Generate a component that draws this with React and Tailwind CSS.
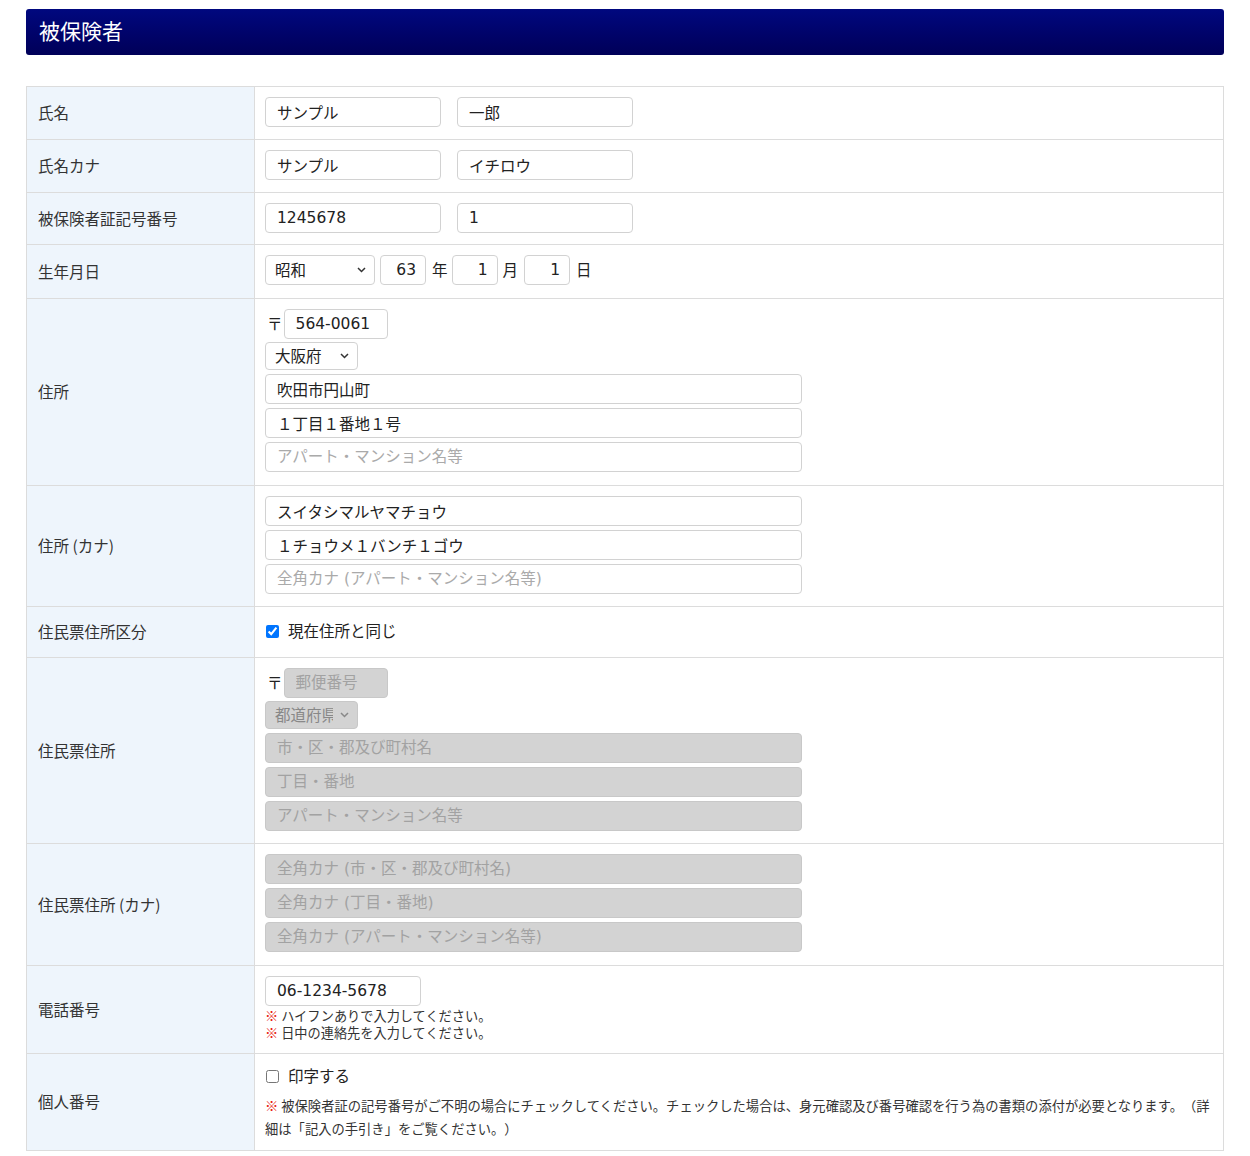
import React from "react";

const FONT = { fontFamily: '"Noto Sans CJK JP", "Noto Sans", sans-serif' };

// Latin digits in the fields are the wide, Verdana-like kind
const inputBase =
  "h-[30px] rounded-[4px] border border-[#d2d2d2] pl-[11px] pr-3 text-[15.5px] text-[#222] outline-none placeholder:text-[#aaa] font-['DejaVu_Sans','Noto_Sans_CJK_JP',sans-serif]";
const inputDisabled =
  "h-[30px] rounded-[4px] border border-[#c8c8c8] bg-[#d3d3d3] pl-[11px] pr-3 text-[15.5px] outline-none placeholder:text-[#a2a2a2] font-['DejaVu_Sans','Noto_Sans_CJK_JP',sans-serif]";

const Chevron = ({ color = "#333" }) => (
  <svg
    width="9"
    height="6"
    viewBox="0 0 9 6"
    className="pointer-events-none absolute right-[9px] top-1/2 -translate-y-1/2"
  >
    <path d="M1 1l3.5 3.5L8 1" fill="none" stroke={color} strokeWidth="1.5" />
  </svg>
);

const Select = ({ value, width, height = "h-[30px]", disabled }) => (
  <div className={`relative ${width}`}>
    <select
      disabled={disabled}
      defaultValue={value}
      className={`${height} w-full appearance-none rounded-[4px] border pl-[9px] pr-6 text-[15.5px] outline-none ${
        disabled
          ? "border-[#c8c8c8] bg-[#d3d3d3] text-[#888]"
          : "border-[#d2d2d2] bg-white text-[#222]"
      }`}
    >
      <option value={value}>{value}</option>
    </select>
    <Chevron color={disabled ? "#888" : "#333"} />
  </div>
);

const Row = ({ label, children, cellClass = "pt-[10px] pb-[12px]" }) => (
  <div className="grid grid-cols-[228px_1fr] border-b border-[#dcdcdc] last:border-b-0">
    <div className="flex items-center border-r border-[#dcdcdc] bg-[#eef5fc] pl-[11px] text-[15.5px] text-[#333]">
      {label}
    </div>
    <div className={`px-[10px] ${cellClass}`}>{children}</div>
  </div>
);

const Mark = () => <span className="text-[#e8190f]">※</span>;

export default function App() {
  return (
    <div className="min-h-[1156px] bg-white px-[26px] pt-[9px] pb-6" style={FONT}>
      <div className="flex h-[46px] items-center rounded-[3px] bg-linear-to-b from-[#00087f] to-[#000058] pl-[13px] pb-[3px]">
        <h2 className="text-[21px] leading-none text-white">被保険者</h2>
      </div>

      <div className="mt-[31px] border border-[#dcdcdc]">
        <Row label="氏名">
          <div className="flex gap-4">
            <input className={`${inputBase} w-[176px]`} defaultValue="サンプル" />
            <input className={`${inputBase} w-[176px]`} defaultValue="一郎" />
          </div>
        </Row>

        <Row label="氏名カナ">
          <div className="flex gap-4">
            <input className={`${inputBase} w-[176px]`} defaultValue="サンプル" />
            <input className={`${inputBase} w-[176px]`} defaultValue="イチロウ" />
          </div>
        </Row>

        <Row label="被保険者証記号番号" cellClass="pt-[10px] pb-[11px]">
          <div className="flex gap-4">
            <input className={`${inputBase} w-[176px]`} defaultValue="1245678" />
            <input className={`${inputBase} w-[176px]`} defaultValue="1" />
          </div>
        </Row>

        <Row label="生年月日" cellClass="pt-[10px] pb-[13px]">
          <div className="flex items-center text-[15.5px] text-[#222]">
            <Select value="昭和" width="w-[110px]" />
            <input className={`${inputBase} ml-[5px] w-[46px] pr-[9px] text-right`} defaultValue="63" />
            <span className="ml-[6px] mr-[4px]">年</span>
            <input className={`${inputBase} w-[46px] pr-[9px] text-right`} defaultValue="1" />
            <span className="ml-[5px] mr-[6px]">月</span>
            <input className={`${inputBase} w-[46px] pr-[9px] text-right`} defaultValue="1" />
            <span className="ml-[6px]">日</span>
          </div>
        </Row>

        <Row label="住所" cellClass="pt-[10px] pb-[13px]">
          <div className="flex flex-col">
            <div className="flex items-center text-[15.5px] text-[#222]">
              <span className="ml-[2px] mr-[1px]">〒</span>
              <input className={`${inputBase} w-[104px]`} defaultValue="564-0061" />
            </div>
            <div className="mt-[3px]">
              <Select value="大阪府" width="w-[93px]" height="h-[28px]" />
            </div>
            <div className="mt-[4px] flex w-[537px] flex-col gap-[4px]">
              <input className={inputBase} defaultValue="吹田市円山町" />
              <input className={inputBase} defaultValue="１丁目１番地１号" />
              <input className={inputBase} placeholder="アパート・マンション名等" />
            </div>
          </div>
        </Row>

        <Row label="住所 (カナ)" cellClass="pt-[10px] pb-[12px]">
          <div className="flex w-[537px] flex-col gap-[4px]">
            <input className={inputBase} defaultValue="スイタシマルヤマチョウ" />
            <input className={inputBase} defaultValue="１チョウメ１バンチ１ゴウ" />
            <input className={inputBase} placeholder="全角カナ (アパート・マンション名等)" />
          </div>
        </Row>

        <Row label="住民票住所区分" cellClass="pt-[10px] pb-[12px]">
          <label className="flex h-[28px] items-center text-[15.5px] text-[#222]">
            <input type="checkbox" defaultChecked className="ml-[1px] h-[13px] w-[13px] accent-[#0075ff]" />
            <span className="ml-[9px]">現在住所と同じ</span>
          </label>
        </Row>

        <Row label="住民票住所" cellClass="pt-[10px] pb-[12px]">
          <div className="flex flex-col">
            <div className="flex items-center text-[15.5px] text-[#222]">
              <span className="ml-[2px] mr-[1px]">〒</span>
              <input disabled className={`${inputDisabled} w-[104px]`} placeholder="郵便番号" />
            </div>
            <div className="mt-[3px]">
              <Select value="都道府県" width="w-[93px]" height="h-[28px]" disabled />
            </div>
            <div className="mt-[4px] flex w-[537px] flex-col gap-[4px]">
              <input disabled className={inputDisabled} placeholder="市・区・郡及び町村名" />
              <input disabled className={inputDisabled} placeholder="丁目・番地" />
              <input disabled className={inputDisabled} placeholder="アパート・マンション名等" />
            </div>
          </div>
        </Row>

        <Row label="住民票住所 (カナ)" cellClass="pt-[10px] pb-[13px]">
          <div className="flex w-[537px] flex-col gap-[4px]">
            <input disabled className={inputDisabled} placeholder="全角カナ (市・区・郡及び町村名)" />
            <input disabled className={inputDisabled} placeholder="全角カナ (丁目・番地)" />
            <input disabled className={inputDisabled} placeholder="全角カナ (アパート・マンション名等)" />
          </div>
        </Row>

        <Row label="電話番号" cellClass="pt-[10px] pb-[12px]">
          <input className={`${inputBase} w-[156px]`} defaultValue="06-1234-5678" />
          <div className="mt-[1px] text-[13.2px] leading-[17px] text-[#333]">
            <div>
              <Mark /> ハイフンありで入力してください。
            </div>
            <div>
              <Mark /> 日中の連絡先を入力してください。
            </div>
          </div>
        </Row>

        <Row label="個人番号" cellClass="pt-[10px] pb-[10px]">
          <label className="flex h-[24px] items-center text-[15.5px] text-[#222]">
            <input type="checkbox" className="ml-[1px] h-[13px] w-[13px]" />
            <span className="ml-[9px]">印字する</span>
          </label>
          <div className="mt-[6px] text-[13.3px] leading-[23px] text-[#333] [text-spacing-trim:space-all]">
            <Mark /> 被保険者証の記号番号がご不明の場合にチェックしてください。チェックした場合は、身元確認及び番号確認を行う為の書類の添付が必要となります。（詳
            <br />
            細は「記入の手引き」をご覧ください。）
          </div>
        </Row>
      </div>
    </div>
  );
}
